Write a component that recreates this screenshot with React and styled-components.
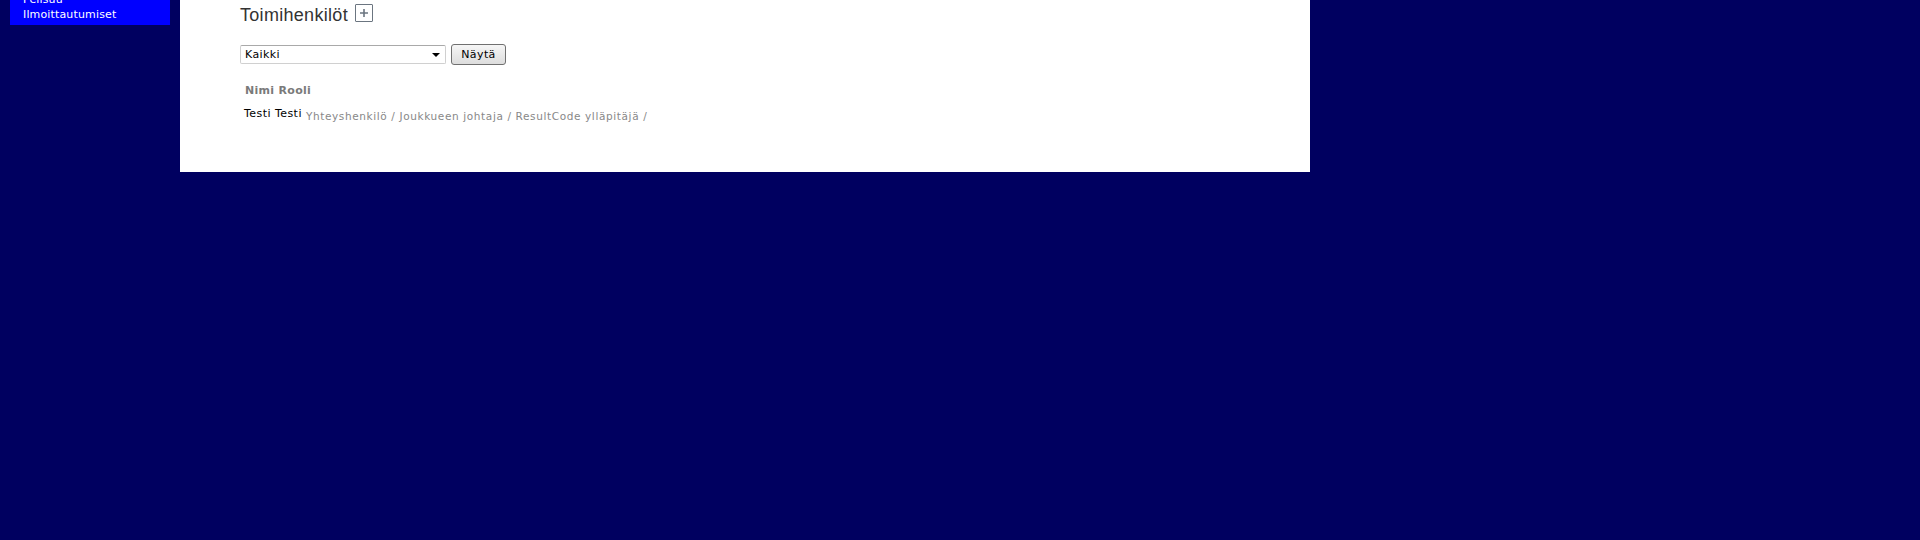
import React from "react";
import styled, { createGlobalStyle } from "styled-components";

const GlobalStyle = createGlobalStyle`
  html, body {
    margin: 0;
    padding: 0;
    background: #000060;
  }
  body {
    font-family: "DejaVu Sans", Verdana, sans-serif;
    font-size: 11px;
  }
`;

const Page = styled.div`
  display: flex;
  align-items: flex-start;
  gap: 10px;
  padding-left: 10px;
  height: 540px;
  overflow: hidden;
`;

const Sidebar = styled.nav`
  width: 160px;
  flex-shrink: 0;
  margin-top: -8px;
  padding: 0 0 3px 13px;
  box-sizing: border-box;
  background: #0000ff;
`;

const NavLink = styled.a`
  display: block;
  color: #ffffff;
  font-size: 11px;
  line-height: 15px;
  letter-spacing: 0.15px;
  text-decoration: none;
`;

const Main = styled.main`
  width: 1130px;
  height: 172px;
  flex-shrink: 0;
  background: #ffffff;
  padding: 4px 0 0 60px;
  box-sizing: border-box;
`;

const TitleRow = styled.div`
  display: flex;
  align-items: flex-start;
  gap: 7px;
`;

const Title = styled.h2`
  margin: 0;
  font-family: "Liberation Sans", Arial, sans-serif;
  font-weight: normal;
  font-size: 18px;
  line-height: 22px;
  letter-spacing: 0.3px;
  color: #333333;
`;

const AddButton = styled.button`
  width: 18px;
  height: 18px;
  padding: 0;
  display: flex;
  align-items: center;
  justify-content: center;
  background: #ffffff;
  border: 1px solid #6b7580;
  border-radius: 1px;
  cursor: pointer;
`;

const FilterRow = styled.form`
  display: flex;
  align-items: center;
  gap: 5px;
  margin-top: 18px;
`;

const SelectBox = styled.div`
  position: relative;
  width: 206px;
  height: 19px;
  box-sizing: border-box;
  border: 1px solid #d0d0d0;
  border-top-color: #a9a9a9;
  border-radius: 2px;
  background: #ffffff;
  font-size: 11px;
  line-height: 17px;
  letter-spacing: 0.4px;
  color: #000000;
  padding-left: 4px;
`;

const Caret = styled.span`
  position: absolute;
  right: 5px;
  top: 7px;
  width: 0;
  height: 0;
  border-left: 4px solid transparent;
  border-right: 4px solid transparent;
  border-top: 4px solid #000000;
`;

const ShowButton = styled.button`
  width: 55px;
  height: 21px;
  padding: 0;
  font-family: "DejaVu Sans", Verdana, sans-serif;
  font-size: 11px;
  letter-spacing: 0.4px;
  color: #000000;
  background: linear-gradient(#f6f6f6, #dddddd);
  border: 1px solid #707070;
  border-radius: 3px;
  cursor: pointer;
`;

const List = styled.div`
  margin-top: 19px;
  padding-left: 4px;
`;

const HeaderRow = styled.div`
  font-weight: bold;
  font-size: 11px;
  line-height: 14px;
  letter-spacing: 0.3px;
  color: #7a7a7a;
  padding-left: 1px;
`;

const PersonRow = styled.div`
  display: flex;
  align-items: flex-end;
  gap: 4px;
  margin-top: 9px;
`;

const Name = styled.span`
  font-size: 11px;
  line-height: 14px;
  letter-spacing: 0.45px;
  color: #000000;
`;

const Roles = styled.span`
  font-size: 10.5px;
  line-height: 12px;
  letter-spacing: 0.62px;
  color: #888888;
  margin-bottom: -1px;
`;

const people = [
  {
    name: "Testi Testi",
    roles: ["Yhteyshenkilö", "Joukkueen johtaja", "ResultCode ylläpitäjä"],
  },
];

export default function App() {
  return (
    <>
      <GlobalStyle />
      <Page>
        <Sidebar>
          <NavLink href="#">Pelisuu</NavLink>
          <NavLink href="#">Ilmoittautumiset</NavLink>
        </Sidebar>
        <Main>
          <TitleRow>
            <Title>Toimihenkilöt</Title>
            <AddButton aria-label="Lisää">
              <svg width="10" height="10" viewBox="0 0 10 10">
                <path d="M5 1v8M1 5h8" stroke="#6b7580" strokeWidth="1.6" />
              </svg>
            </AddButton>
          </TitleRow>
          <FilterRow onSubmit={(e) => e.preventDefault()}>
            <SelectBox>
              Kaikki
              <Caret />
            </SelectBox>
            <ShowButton type="submit">Näytä</ShowButton>
          </FilterRow>
          <List>
            <HeaderRow>Nimi Rooli</HeaderRow>
            {people.map((p) => (
              <PersonRow key={p.name}>
                <Name>{p.name}</Name>
                <Roles>{p.roles.map((r) => r + " / ").join("")}</Roles>
              </PersonRow>
            ))}
          </List>
        </Main>
      </Page>
    </>
  );
}
